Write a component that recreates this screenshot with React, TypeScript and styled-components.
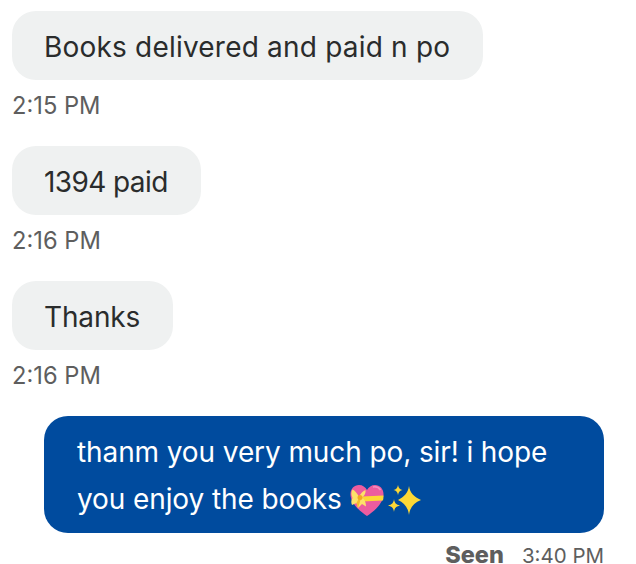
import styled, { createGlobalStyle } from "styled-components"

const GlobalStyle = createGlobalStyle`
    html, body {
        margin: 0;
        background: #ffffff;
    }
`

const GiftHeart = () => (
    <HeartSvg width="34" height="31" viewBox="0 0 34 31">
        <path d="M17 31C11 27 1 19 .5 10C.2 4 4 0 9 0C12.500 0 15.500 2 17 5C18.500 2 21.500 0 25 0C30 0 33.800 4 33.500 10C33 19 23 27 17 31Z" fill="#ec5c9f" />
        <path d="M23 2C26 1.500 29 2.500 30.500 5" stroke="#f48fbf" strokeWidth="1.500" fill="none" />
        <path d="M12 11.500L33.500 10.500C33.500 12.500 33.300 14 33 15.500L12 16.500Z" fill="#fdd835" />
        <path d="M9 12C7 8 5 5.500 2.500 4.500C1 7 1 10 2.500 13C1 15 1 18 2 20L6.500 18L8 23L12 19L16 21.500C16 17 14.500 14.500 12 12.500C14.500 10.500 16 8 15.500 5C13 6 10.500 8.500 9 12Z" fill="#fde26a" />
        <path d="M9 13L6.500 18L8 23L10.500 15Z" fill="#f7b92e" />
        <circle cx="10" cy="12.500" r="2.500" fill="#f2a922" />
    </HeartSvg>
)

const Sparkles = () => (
    <SparkleSvg width="34" height="31" viewBox="0 0 34 31">
        <path d="M21 1C22 8 26 12 33 15C26 18 22 22 21 30C20 22 16 18 10 15C16 12 20 8 21 1Z" fill="#fdd835" />
        <path d="M10 0C10.500 3 12 4.500 14.500 5C12 5.500 10.500 7 10 10C9.500 7 8 5.500 5.500 5C8 4.500 9.500 3 10 0Z" fill="#fdd835" />
        <path d="M6 14C6.500 18 8 19.500 12 20.500C8 21.500 6.500 23 6 27C5.500 23 4 21.500 0 20.500C4 19.500 5.500 18 6 14Z" fill="#fdd835" />
    </SparkleSvg>
)

export default function App() {
    return (
        <>
            <GlobalStyle />
            <Thread>
                <Incoming>
                    <Bubble $tracking={0.2}>Books delivered and paid n po</Bubble>
                    <Time>2:15 PM</Time>
                </Incoming>
                <Incoming>
                    <Bubble $tracking={-0.6}>1394 paid</Bubble>
                    <Time>2:16 PM</Time>
                </Incoming>
                <Incoming>
                    <Bubble $tracking={-0.15}>Thanks</Bubble>
                    <Time>2:16 PM</Time>
                </Incoming>
                <Outgoing>
                    <OwnBubble>
                        thanm you very much po, sir! i hope
                        <br />
                        you enjoy the books <GiftHeart /><Sparkles />
                    </OwnBubble>
                    <Status>
                        <Seen>Seen</Seen>
                        <SentAt>3:40 PM</SentAt>
                    </Status>
                </Outgoing>
            </Thread>
        </>
    )
}

const Thread = styled.div`
    width: 636px;
    height: 564px;
    box-sizing: border-box;
    padding: 11px 32px 0 12px;
    overflow: hidden;
    display: flex;
    flex-direction: column;
    gap: 27px;
    font-family: "Inter", "Liberation Sans", sans-serif;
`

const Incoming = styled.div`
    display: flex;
    flex-direction: column;
    align-items: flex-start;
    gap: 12px;
`

const Bubble = styled.div<{ $tracking: number }>`
    height: 69px;
    padding: 2px 33px 0 32px;
    display: flex;
    align-items: center;
    box-sizing: border-box;
    background: #eff1f1;
    border-radius: 24px;
    color: #2a2c2c;
    font-size: 28px;
    letter-spacing: ${({ $tracking }) => $tracking}px;
    white-space: nowrap;
`

const Time = styled.div`
    height: 27px;
    line-height: 27px;
    color: #5e5e5e;
    font-size: 23.700px;
`

const Outgoing = styled.div`
    display: flex;
    flex-direction: column;
    align-items: flex-end;
    gap: 14px;
`

const OwnBubble = styled.div`
    width: 560px;
    height: 117px;
    padding: 13px 32px 0 33px;
    box-sizing: border-box;
    background: #004b9e;
    border-radius: 24px;
    color: #ffffff;
    font-size: 28px;
    letter-spacing: -0.1px;
    line-height: 47px;
    white-space: nowrap;
`

const HeartSvg = styled.svg`
    vertical-align: -7px;
`

const SparkleSvg = styled.svg`
    vertical-align: -7px;
    margin-left: 4px;
`

const Status = styled.div`
    display: flex;
    align-items: baseline;
    gap: 18px;
    color: #5e5e5e;
    line-height: 16px;
`

const Seen = styled.span`
    font-size: 23.500px;
    font-weight: 800;
`

const SentAt = styled.span`
    font-size: 20.500px;
`
